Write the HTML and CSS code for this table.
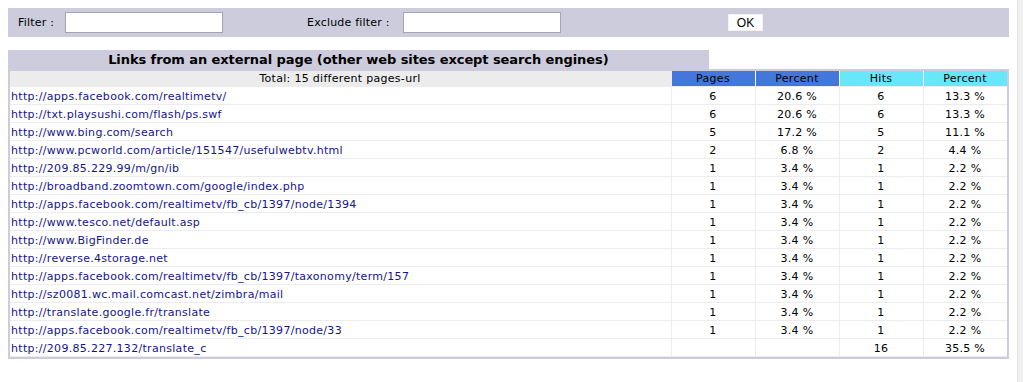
FILE: index.html
```html
<!DOCTYPE html>
<html>
<head>
<meta charset="utf-8">
<title>AWStats - Links from an external page</title>
<link rel="stylesheet" href="styles.css">
</head>
<body>
<div class="page">
  <div class="content">
    <form class="filterbar">
      <label class="flabel flabel-first" for="urlfilter">Filter :</label>
      <input class="ffield" type="text" id="urlfilter">
      <label class="flabel flabel-ex" for="urlfilterex">Exclude filter :</label>
      <input class="ffield" type="text" id="urlfilterex">
      <button class="okbtn" type="button">OK</button>
    </form>

    <table class="aws-border">
      <tr class="title-row">
        <td class="aws-title">Links from an external page (other web sites except search engines)</td>
        <td class="aws-blank"></td>
      </tr>
      <tr>
        <td colspan="2" class="wrap">
          <table class="aws-data">
            <tr class="head">
              <th class="total">Total: 15 different pages-url</th>
              <th class="num pages">Pages</th>
              <th class="num pages">Percent</th>
              <th class="num hits">Hits</th>
              <th class="num hits">Percent</th>
            </tr>
            <tr><td class="url"><a href="#">http://apps.facebook.com/realtimetv/</a></td><td>6</td><td>20.6 %</td><td>6</td><td>13.3 %</td></tr>
            <tr><td class="url"><a href="#">http://txt.playsushi.com/flash/ps.swf</a></td><td>6</td><td>20.6 %</td><td>6</td><td>13.3 %</td></tr>
            <tr><td class="url"><a href="#">http://www.bing.com/search</a></td><td>5</td><td>17.2 %</td><td>5</td><td>11.1 %</td></tr>
            <tr><td class="url"><a href="#">http://www.pcworld.com/article/151547/usefulwebtv.html</a></td><td>2</td><td>6.8 %</td><td>2</td><td>4.4 %</td></tr>
            <tr><td class="url"><a href="#">http://209.85.229.99/m/gn/ib</a></td><td>1</td><td>3.4 %</td><td>1</td><td>2.2 %</td></tr>
            <tr><td class="url"><a href="#">http://broadband.zoomtown.com/google/index.php</a></td><td>1</td><td>3.4 %</td><td>1</td><td>2.2 %</td></tr>
            <tr><td class="url"><a href="#">http://apps.facebook.com/realtimetv/fb_cb/1397/node/1394</a></td><td>1</td><td>3.4 %</td><td>1</td><td>2.2 %</td></tr>
            <tr><td class="url"><a href="#">http://www.tesco.net/default.asp</a></td><td>1</td><td>3.4 %</td><td>1</td><td>2.2 %</td></tr>
            <tr><td class="url"><a href="#">http://www.BigFinder.de</a></td><td>1</td><td>3.4 %</td><td>1</td><td>2.2 %</td></tr>
            <tr><td class="url"><a href="#">http://reverse.4storage.net</a></td><td>1</td><td>3.4 %</td><td>1</td><td>2.2 %</td></tr>
            <tr><td class="url"><a href="#">http://apps.facebook.com/realtimetv/fb_cb/1397/taxonomy/term/157</a></td><td>1</td><td>3.4 %</td><td>1</td><td>2.2 %</td></tr>
            <tr><td class="url"><a href="#">http://sz0081.wc.mail.comcast.net/zimbra/mail</a></td><td>1</td><td>3.4 %</td><td>1</td><td>2.2 %</td></tr>
            <tr><td class="url"><a href="#">http://translate.google.fr/translate</a></td><td>1</td><td>3.4 %</td><td>1</td><td>2.2 %</td></tr>
            <tr><td class="url"><a href="#">http://apps.facebook.com/realtimetv/fb_cb/1397/node/33</a></td><td>1</td><td>3.4 %</td><td>1</td><td>2.2 %</td></tr>
            <tr><td class="url"><a href="#">http://209.85.227.132/translate_c</a></td><td></td><td></td><td>16</td><td>35.5 %</td></tr>
          </table>
        </td>
      </tr>
    </table>
  </div>
  <div class="scrollstrip"></div>
</div>
</body>
</html>
```

FILE: styles.css
```css
html, body {
  margin: 0;
  padding: 0;
  background: #ffffff;
}

body {
  font-family: "DejaVu Sans", Verdana, sans-serif;
  font-size: 11px;
  color: #000000;
}

.page {
  display: flex;
  min-height: 382px;
}

.content {
  flex: 1;
  padding: 8px;
  min-width: 0;
}

.scrollstrip {
  width: 5px;
  background: #f1f1f1;
  border-left: 1px solid #e4e4e4;
}

/* filter bar */
.filterbar {
  display: flex;
  align-items: center;
  height: 29px;
  margin: 0 0 13px 0;
  background: #ccccdd;
}

.flabel {
  font-size: 11px;
  letter-spacing: 0.2px;
  white-space: nowrap;
  box-sizing: border-box;
}

.flabel-first {
  width: 57px;
  padding-left: 10px;
}

.flabel-ex {
  width: 96px;
  margin-left: 84px;
}

.ffield {
  box-sizing: border-box;
  width: 158px;
  height: 21px;
  margin: 0;
  border: 1px solid #a5a5b0;
  background: #ffffff;
  font-family: "DejaVu Sans", Verdana, sans-serif;
  font-size: 13px;
  padding: 1px 2px;
}

.okbtn {
  box-sizing: border-box;
  margin-left: 167px;
  width: 35px;
  height: 17px;
  padding: 0;
  border: 1px solid #f2f2f2;
  background: #ffffff;
  font-family: "Liberation Sans", Arial, sans-serif;
  font-size: 12px;
  color: #000000;
}

/* main table */
.aws-border {
  width: 100%;
  border-collapse: collapse;
  background: #ccccdd;
}

.aws-border td {
  padding: 0;
}

.title-row td {
  height: 19px;
}

.aws-title {
  width: 70%;
  font-family: "DejaVu Sans", Verdana, sans-serif;
  font-size: 13px;
  font-weight: bold;
  letter-spacing: -0.08px;
  text-align: center;
  background: #ccccdd;
  color: #000000;
}

.aws-blank {
  background: #ffffff;
}

.aws-border td.wrap {
  padding: 2px;
}

.aws-data {
  width: 100%;
  border-collapse: collapse;
  background: #ffffff;
}

.aws-data th,
.aws-data td {
  font-family: "DejaVu Sans", Verdana, sans-serif;
  font-size: 11px;
  font-weight: normal;
  letter-spacing: 0.3px;
  text-align: center;
  color: #000000;
  border-right: 1px solid #ececec;
  border-bottom: 1px solid #ececec;
  padding: 0 2px 0 1px;
  white-space: nowrap;
}

.aws-data tr.head th {
  line-height: 15px;
}

.aws-data td {
  line-height: 15px;
  padding-top: 2px;
}

.aws-data th.total {
  background: #ececec;
}

.aws-data th.num {
  width: 80px;
  border-right-color: #ffffff;
}

.aws-data th.pages {
  background: #4477dd;
}

.aws-data th.hits {
  background: #66e8f8;
}

.aws-data td.url {
  text-align: left;
  padding-left: 1px;
}

.aws-data th:last-child,
.aws-data td:last-child {
  border-right: 0;
}

.aws-data a {
  color: #14148c;
  text-decoration: none;
}
```
